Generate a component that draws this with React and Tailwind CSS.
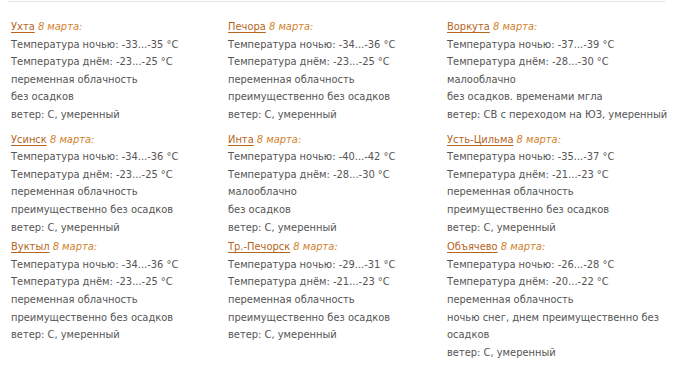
const ROWS = [
  [
    {
      city: 'Ухта',
      lines: ['Температура ночью: -33...-35 °C', 'Температура днём: -23...-25 °C', 'переменная облачность', 'без осадков', 'ветер: С, умеренный'],
    },
    {
      city: 'Печора',
      lines: ['Температура ночью: -34...-36 °C', 'Температура днём: -23...-25 °C', 'переменная облачность', 'преимущественно без осадков', 'ветер: С, умеренный'],
    },
    {
      city: 'Воркута',
      lines: ['Температура ночью: -37...-39 °C', 'Температура днём: -28...-30 °C', 'малооблачно', 'без осадков. временами мгла', 'ветер: СВ с переходом на ЮЗ, умеренный'],
    },
  ],
  [
    {
      city: 'Усинск',
      lines: ['Температура ночью: -34...-36 °C', 'Температура днём: -23...-25 °C', 'переменная облачность', 'преимущественно без осадков', 'ветер: С, умеренный'],
    },
    {
      city: 'Инта',
      lines: ['Температура ночью: -40...-42 °C', 'Температура днём: -28...-30 °C', 'малооблачно', 'без осадков', 'ветер: С, умеренный'],
    },
    {
      city: 'Усть-Цильма',
      lines: ['Температура ночью: -35...-37 °C', 'Температура днём: -21...-23 °C', 'переменная облачность', 'преимущественно без осадков', 'ветер: С, умеренный'],
    },
  ],
  [
    {
      city: 'Вуктыл',
      lines: ['Температура ночью: -34...-36 °C', 'Температура днём: -23...-25 °C', 'переменная облачность', 'преимущественно без осадков', 'ветер: С, умеренный'],
    },
    {
      city: 'Тр.-Печорск',
      lines: ['Температура ночью: -29...-31 °C', 'Температура днём: -21...-23 °C', 'переменная облачность', 'преимущественно без осадков', 'ветер: С, умеренный'],
    },
    {
      city: 'Объячево',
      lines: ['Температура ночью: -26...-28 °C', 'Температура днём: -20...-22 °C', 'переменная облачность', 'ночью снег, днем преимущественно без осадков', 'ветер: С, умеренный'],
    },
  ],
]

function Forecast({ city, lines }) {
  return (
    <div>
      <p>
        <a href="#" className="text-[#b5651d] underline underline-offset-2">{city}</a>{' '}
        <em className="text-[#d2822d]">8 марта:</em>
      </p>
      {lines.map((l, i) => (
        <p key={i}>{l}</p>
      ))}
    </div>
  )
}

export default function App() {
  return (
    <div className="w-[683px] h-[381px] bg-white overflow-hidden font-['DejaVu_Sans_Condensed','DejaVu_Sans',sans-serif] text-[11px] leading-[17.6px] text-[#555]">
      <div className="ml-[8px] w-[657px] mt-px border-t border-[#e2e2e2]" />
      <div className="pt-[16px] pl-[11px]">
        {ROWS.map((row, r) => (
          <div key={r} className={`grid grid-cols-[217px_219px_222px] ${r === 0 ? 'mb-[7px]' : 'mb-[2px]'}`}>
            {row.map((f) => (
              <Forecast key={f.city} {...f} />
            ))}
          </div>
        ))}
      </div>
    </div>
  )
}
